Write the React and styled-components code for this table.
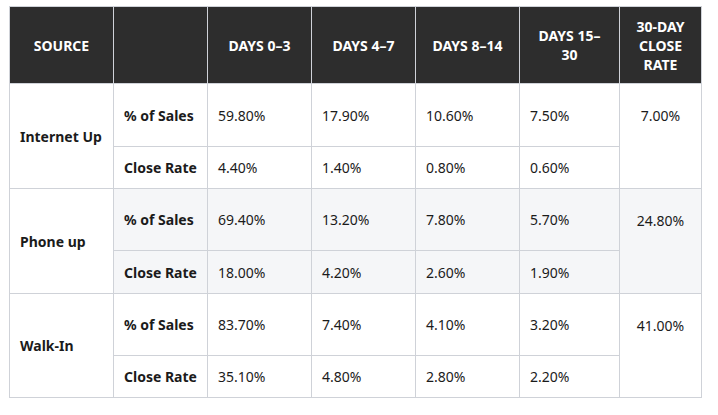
import React from "react";
import styled, { createGlobalStyle } from "styled-components";

const GlobalStyle = createGlobalStyle`
  body {
    margin: 0;
    background: #ffffff;
    font-family: "Noto Sans", "Open Sans", Arial, sans-serif;
  }
`;

const columns = [104, 94, 104, 104, 104, 100, 82];
const headers = ["Source", "", "Days 0–3", "Days 4–7", "Days 8–14", "Days 15–30", "30-Day Close Rate"];

const groups = [
  {
    source: "Internet Up",
    sales: ["59.80%", "17.90%", "10.60%", "7.50%"],
    close: ["4.40%", "1.40%", "0.80%", "0.60%"],
    total: "7.00%",
    heights: [63, 42],
  },
  {
    source: "Phone up",
    sales: ["69.40%", "13.20%", "7.80%", "5.70%"],
    close: ["18.00%", "4.20%", "2.60%", "1.90%"],
    total: "24.80%",
    shaded: true,
    heights: [62, 43],
  },
  {
    source: "Walk-In",
    sales: ["83.70%", "7.40%", "4.10%", "3.20%"],
    close: ["35.10%", "4.80%", "2.80%", "2.20%"],
    total: "41.00%",
    heights: [62, 42],
  },
];

export default function App() {
  return (
    <>
      <GlobalStyle />
      <Page>
        <Table>
          <colgroup>
            {columns.map((w, i) => (
              <col key={i} style={{ width: w }} />
            ))}
          </colgroup>
          <thead>
            <HeadRow>
              {headers.map((h, i) => (
                <HeadCell key={i}>{h}</HeadCell>
              ))}
            </HeadRow>
          </thead>
          <tbody>
            {groups.map((g) => (
              <React.Fragment key={g.source}>
                <Row style={{ height: g.heights[0] }}>
                  <SourceCell rowSpan={2}>{g.source}</SourceCell>
                  <MetricCell $shaded={g.shaded}>% of Sales</MetricCell>
                  {g.sales.map((v, i) => (
                    <Cell key={i} $shaded={g.shaded}>
                      {v}
                    </Cell>
                  ))}
                  <TotalCell rowSpan={2} $shaded={g.shaded}>
                    {g.total}
                  </TotalCell>
                </Row>
                <Row style={{ height: g.heights[1] }}>
                  <MetricCell $shaded={g.shaded}>Close Rate</MetricCell>
                  {g.close.map((v, i) => (
                    <Cell key={i} $shaded={g.shaded}>
                      {v}
                    </Cell>
                  ))}
                </Row>
              </React.Fragment>
            ))}
          </tbody>
        </Table>
      </Page>
    </>
  );
}

const Page = styled.div`
  padding: 6px 0 0 9px;
`;

const Table = styled.table`
  border-collapse: separate;
  border-spacing: 0;
  table-layout: fixed;
  width: 693px;
  border-top: 1px solid #cfd2d8;
  border-left: 1px solid #cfd2d8;
  font-size: 14px;
  line-height: 19px;
  color: #1b1b1b;
`;

const HeadRow = styled.tr`
  height: 77px;
`;

const HeadCell = styled.th`
  background: #2d2d2d;
  color: #ffffff;
  font-weight: 700;
  text-transform: uppercase;
  text-align: center;
  vertical-align: middle;
  padding: 0 12px;
  border-right: 1px solid #cfd2d8;
  border-bottom: 1px solid #cfd2d8;
`;

const Row = styled.tr``;

const Cell = styled.td`
  background: ${(p) => (p.$shaded ? "#f5f6f8" : "#ffffff")};
  padding: 0 10px;
  vertical-align: middle;
  text-align: left;
  border-right: 1px solid #cfd2d8;
  border-bottom: 1px solid #cfd2d8;
`;

const MetricCell = styled(Cell)`
  font-weight: 700;
  white-space: nowrap;
`;

const SourceCell = styled(Cell)`
  font-weight: 700;
  background: #ffffff;
`;

const TotalCell = styled(Cell)`
  text-align: center;
  vertical-align: top;
  padding-top: 22px;
`;
